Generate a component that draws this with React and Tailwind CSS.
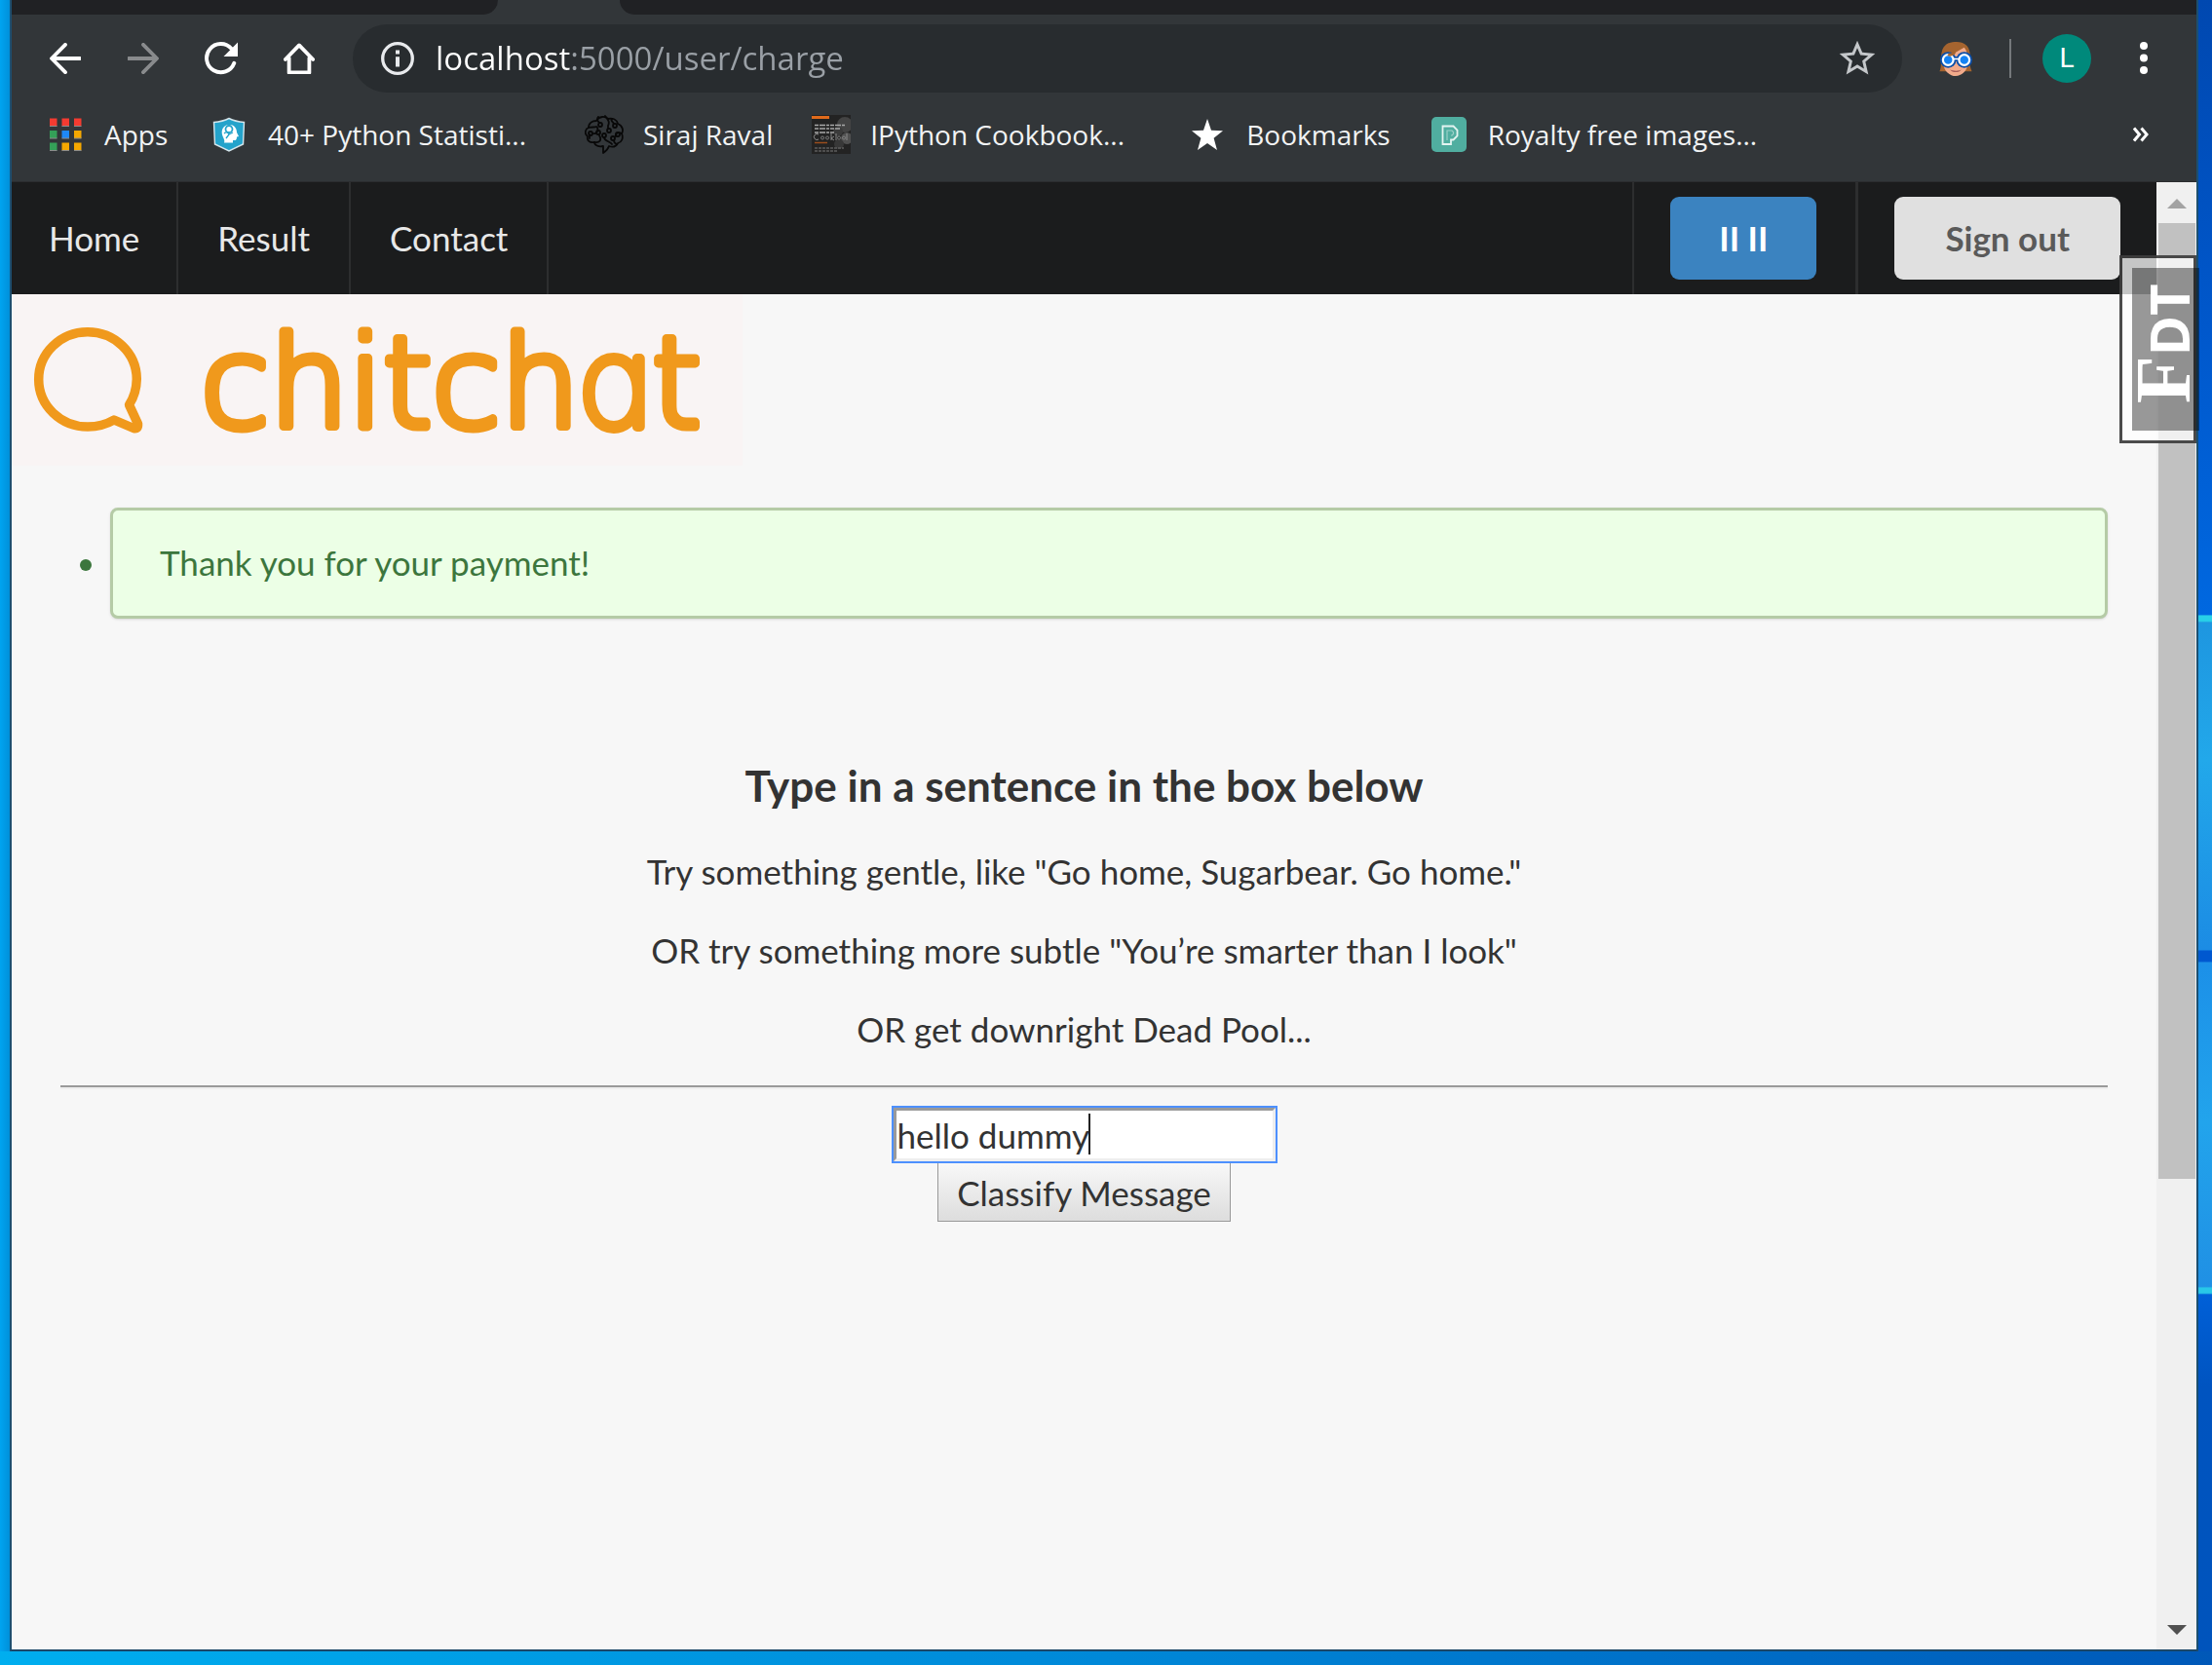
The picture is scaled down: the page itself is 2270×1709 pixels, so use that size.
import React from 'react';

function BackIcon() {
  return (
    <svg className="size-8" viewBox="0 0 32 32" fill="none" stroke="currentColor" strokeWidth="3.8" strokeLinecap="round" strokeLinejoin="round">
      <path d="M16 1.8 2 16l14 14.2M2.5 16H31" />
    </svg>
  );
}

function ReloadIcon() {
  return (
    <svg className="size-9" viewBox="0 0 36 36" fill="none">
      <path d="M31.3 22.8A14.6 14.6 0 1 1 28.6 8" stroke="currentColor" strokeWidth="3.9" strokeLinecap="round" />
      <path d="M35 1.500V16H20.500Z" fill="currentColor" />
    </svg>
  );
}

function HomeIcon() {
  return (
    <svg className="size-8" viewBox="0 0 32 32" fill="none" stroke="currentColor" strokeWidth="3.8" strokeLinecap="round" strokeLinejoin="round">
      <path d="M1.800 17 16 2.400 30.200 17M5.600 15.500V30.500H26.400V15.500" />
    </svg>
  );
}

function InfoIcon() {
  return (
    <svg className="size-[34px]" viewBox="0 0 34 34" fill="none">
      <circle cx="17" cy="17" r="15.3" stroke="#e8eaed" strokeWidth="3.3" />
      <path d="M15 8.500h4v4h-4zM15 15.300h4v10.200h-4z" fill="#e8eaed" />
    </svg>
  );
}

function StarOutlineIcon() {
  return (
    <svg className="size-11" viewBox="0 0 24 24" fill="#c4c7ca">
      <path d="M22 9.240l-7.190-.620L12 2 9.190 8.630 2 9.240l5.460 4.730L5.820 21 12 17.270 18.180 21l-1.630-7.030L22 9.240zM12 15.400l-3.760 2.270 1-4.280-3.320-2.880 4.380-.380L12 6.100l1.710 4.040 4.380.380-3.320 2.880 1 4.280L12 15.400z" />
    </svg>
  );
}

function GogglesFace() {
  return (
    <svg className="size-9" viewBox="0 0 36 37" fill="none">
      <path d="M1 32C4 26 1 18 4 9 7 2 13 1 19 1c8 0 13 4 14 12 0 7-1 12 2 19Z" fill="#a5642f" />
      <path d="M5 17C12 17 21 10 27 7c3 4 5 10 4 17-1 8-7 13-13 13S5 32 5 23Z" fill="#f2ab8b" />
      <path d="M12 30c4 2 9 2 12 0-2 4-10 4-12 0Z" fill="#a9605c" />
      <path d="M15 19h7" stroke="#0d4fa8" strokeWidth="5" />
      <circle cx="10" cy="20" r="8.500" fill="#0d4fa8" />
      <circle cx="27" cy="20" r="8.500" fill="#0d4fa8" />
      <path d="M15 19h7" stroke="#fff" strokeWidth="1.600" />
      <circle cx="10" cy="20" r="5.500" fill="#1583f4" stroke="#fff" strokeWidth="2.300" />
      <circle cx="27" cy="20" r="5.500" fill="#1583f4" stroke="#fff" strokeWidth="2.300" />
      <path d="M10 14c3 2 5 0 7-2" stroke="#a5642f" strokeWidth="3" />
    </svg>
  );
}

function AppsIcon() {
  const colors = ['#f43b31', '#f43b31', '#f43b31', '#34a058', '#1e88f7', '#f5a800', '#34a058', '#f5a800', '#f5a800'];
  return (
    <svg className="size-10" viewBox="0 0 40 40">
      {colors.map((c, i) => (
        <g key={i}>
          <rect x={4 + (i % 3) * 12.5} y={3.500 + Math.floor(i / 3) * 12.5} width="7.500" height="8" fill={c} />
          <rect x={4 + (i % 3) * 12.5} y={11 + Math.floor(i / 3) * 12.5} width="7.500" height="1" fill="#8b8b8b" />
        </g>
      ))}
    </svg>
  );
}

function ShieldIcon() {
  return (
    <svg className="size-10" viewBox="0 0 40 40">
      <path d="M20 3.500C25 6 30 7 35.500 7.500L34.500 30 20 37 5.500 30 4.500 7.500C10 7 15 6 20 3.500Z" fill="#24a3cb" stroke="#d5e6ec" strokeWidth="1.400" />
      <path d="M15 28.500c1.500-3-2.300-6-2.300-10.500C12.700 13 16 10 20.500 10s7.500 3.500 7.500 8l2 4-2 .500c0 3-1 4-4 3.500v2.500Z" fill="#fff" />
      <circle cx="20" cy="14.500" r="3.500" fill="none" stroke="#24a3cb" strokeWidth="1.800" />
      <path d="M15 19c2-2 4-1 5 1l4-2M20 20l-3 4" fill="none" stroke="#24a3cb" strokeWidth="1.300" />
    </svg>
  );
}

function BrainIcon() {
  return (
    <svg className="size-10" viewBox="0 0 40 40" fill="none" stroke="#080808" strokeWidth="1.800" strokeLinecap="round" strokeLinejoin="round">
      <path d="M19 39v-7c-5 1-9-1-9-4-5 1-8-2-7-6-4-3-2-8 1-9 0-5 4-7 8-7 3-5 9-5 12-2 5-1 9 1 10 5 5 2 6 7 4 10 2 5 0 9-4 10-2 4-6 4-9 3-1 3-3 5-6 7Z" />
      <path d="M14 2c-2 2 0 5 1 6M21 1c3 4 5 6 3 10v3M28 4c-2 2 2 4 2 5M10 28c5 1 8-2 5-7M5 24V20M9 19c4 1 5-4 4-6M33 30c-3-1-3-3-3-4M38 19c-4-2-7 0-6 3M20 23c0 4 6 4 8 7M4 13c4-1 6 0 8-1" />
      <circle cx="16" cy="10" r="2" /><circle cx="25" cy="16" r="2" /><circle cx="31" cy="11" r="2" />
      <circle cx="14" cy="18" r="2" /><circle cx="20" cy="21" r="2" /><circle cx="29" cy="24" r="2" />
      <circle cx="6" cy="19" r="2" /><circle cx="34" cy="20" r="2" />
    </svg>
  );
}

function BookCoverIcon() {
  return (
    <svg className="size-10" viewBox="0 0 40 40">
      <rect width="40" height="40" fill="#232323" />
      <circle cx="34" cy="10" r="8" fill="#444" /><circle cx="36" cy="24" r="6" fill="#505050" /><circle cx="27" cy="17" r="5" fill="#3b3b3b" /><circle cx="28" cy="30" r="5" fill="#383838" />
      <rect y="1" width="18" height="3" fill="#e06a1b" />
      <path d="M3 10.500h31M3 14h26M3 18h21" stroke="#a8a8a8" strokeWidth="1.500" strokeDasharray="4 1 6 1 3 1" />
      <path d="M7 20a3 3 0 1 0 0 5M11 22a1.500 1.500 0 1 0 .1 0M16 22a1.500 1.500 0 1 0 .1 0M20 19v7M23 22l-3 2 3 2M25 19v7M28 22a1.500 1.500 0 1 0 .1 0M33 22a1.500 1.500 0 1 0 .1 0M36 19v7" stroke="#8a8a8a" fill="none" />
      <path d="M3 28.500h13" stroke="#9b4d1d" strokeWidth="1.500" />
      <path d="M3 34h30M3 37h24" stroke="#5e5e5e" strokeWidth="1.400" strokeDasharray="3 1" />
    </svg>
  );
}

function StarIcon() {
  return (
    <svg className="size-10" viewBox="0 0 40 40">
      <path d="M20 4l4 11.800 12 .4-9.400 7.500L30 36l-10-7-10 7 3.400-12.300L4 16.200l12-.4Z" fill="#fff" />
    </svg>
  );
}

function PexelsIcon() {
  return (
    <svg className="size-10" viewBox="0 0 40 40">
      <rect x="2" y="2" width="36" height="36" rx="5" fill="#50aea0" />
      <path d="M13.500 11.500h11l4 4v6l-4 4H22V30h-8.500Z" fill="none" stroke="#e3f4f1" strokeWidth="1.800" />
      <path d="M18 26V16h5l1.500 1.500v2L23 21h-1" fill="none" stroke="#9bd0c8" strokeWidth="1.200" />
    </svg>
  );
}

const bookmarks = [
  { label: 'Apps', icon: AppsIcon, size: 'w-[68px]' },
  { label: '40+ Python Statisti...', icon: ShieldIcon, size: 'w-[285px]' },
  { label: 'Siraj Raval', icon: BrainIcon, size: '' },
  { label: 'IPython Cookbook...', icon: BookCoverIcon, size: 'w-[286px]' },
  { label: 'Bookmarks', icon: StarIcon, size: '' },
  { label: 'Royalty free images...', icon: PexelsIcon, size: 'w-[285px]' },
];

function BrowserChrome() {
  return (
    <header className="bg-[#323639] font-['Open_Sans',sans-serif] text-white">
      <div className="flex h-[15px]">
        <div className="w-[499px] rounded-br-[15px] bg-[#202124]" />
        <div className="w-[125px]" />
        <div className="flex-1 rounded-bl-[15px] bg-[#202124]" />
      </div>
      <div className="flex h-[89px] items-center pr-[50px] pl-[39px]">
        <button aria-label="Back"><BackIcon /></button>
        <button aria-label="Forward" className="ml-12 rotate-180 text-[#898b8d]"><BackIcon /></button>
        <button aria-label="Reload" className="ml-[46px]"><ReloadIcon /></button>
        <button aria-label="Home" className="ml-[46px]"><HomeIcon /></button>
        <div className="ml-[39px] flex h-[70px] flex-1 items-center rounded-full bg-[#282c2f] pr-6 pl-[29px]">
          <InfoIcon />
          <input
            aria-label="Address"
            defaultValue="localhost:5000/user/charge"
            className="ml-[22px] min-w-0 flex-1 bg-linear-[to_right,#fff_139px,#9aa0a6_139px] bg-clip-text text-[33px] leading-[60px] text-transparent outline-none"
          />
          <button aria-label="Bookmark this page"><StarOutlineIcon /></button>
        </div>
        <button aria-label="Extension" className="ml-[37px]"><GogglesFace /></button>
        <div className="ml-[37px] h-10 w-0.5 bg-[#75787b]" />
        <button aria-label="Profile" className="ml-8 size-[50px] rounded-full bg-[#00897b] font-[Roboto] text-[28px] leading-[50px]">L</button>
        <button aria-label="Menu" className="ml-[50px]">
          <svg className="h-9 w-2" viewBox="0 0 8 36" fill="#fff">
            <circle cx="4" cy="5" r="4" /><circle cx="4" cy="17.500" r="4" /><circle cx="4" cy="30" r="4" />
          </svg>
        </button>
      </div>
      <nav aria-label="Bookmarks" className="flex h-[83px] items-center gap-10 border-b border-[#2b2d2f] pr-[49px] pb-[14px] pl-[35px] text-[28px] leading-10 text-[#f1f3f4]">
        {bookmarks.map(({ label, icon: Icon, size }) => (
          <a key={label} href="#" className="flex items-center gap-5 whitespace-nowrap">
            <Icon />
            <span className={size}>{label}</span>
          </a>
        ))}
        <button aria-label="More bookmarks" className="ml-auto">
          <svg className="h-4 w-4" viewBox="0 0 16 16" fill="none" stroke="#fff" strokeWidth="3">
            <path d="M1 1.500 6.500 8 1 14.500M8.500 1.500 14 8l-5.500 6.500" />
          </svg>
        </button>
      </nav>
    </header>
  );
}

function MenuBar() {
  return (
    <nav aria-label="Main" className="flex h-[115px] bg-[#1b1c1d] text-[35px] leading-[50px] text-[#e8e8e8]">
      <a href="#" className="flex items-center border-r-2 border-[#2d2e2f] px-[38px] pb-0.5">Home</a>
      <a href="#" className="flex items-center border-r-2 border-[#2d2e2f] px-10 pb-0.5">Result</a>
      <a href="#" className="flex items-center border-r-2 border-[#2d2e2f] px-10 pb-0.5">Contact</a>
      <div className="ml-auto flex items-center border-l-2 border-[#2d2e2f] pr-10 pl-[37px]">
        <button className="h-[85px] rounded-[9px] bg-[#3b83c0] px-[50px] pb-0.5 font-bold text-white">II II</button>
      </div>
      <div className="flex items-center border-l-[3px] border-[#2d2e2f] px-[37px]">
        <button className="h-[85px] rounded-[9px] bg-[#e0e0e0] px-[52px] pb-0.5 font-bold text-[#5a5a5a]">Sign out</button>
      </div>
    </nav>
  );
}

function Logo() {
  return (
    <svg className="h-44 w-[750px] bg-[#f9f4f4]" viewBox="0 0 750 176" role="img" aria-label="chitchat">
      <path
        d="M128.300 87A50.300 48.600 0 1 0 78 136Q93 136 105 129L125 137.500Q130 139 129.500 133L120.500 113.500Q128 102 128.300 87Z"
        fill="none" stroke="#f0991c" strokeWidth="9.500" strokeLinejoin="round" strokeLinecap="round"
      />
      <text
        x="194" y="136" fontSize="128" fontFamily="'DejaVu Sans Light', 'DejaVu Sans', sans-serif" fontWeight="200"
        fill="#f0991c" stroke="#f0991c" strokeWidth="9" strokeLinejoin="round"
      >
        chitch
        <tspan
          fontFamily="Inter, sans-serif" fontWeight="100" strokeWidth="10"
          className="[font-feature-settings:'cv11']"
        >
          a
        </tspan>
        t
      </text>
    </svg>
  );
}

function FdtTab() {
  return (
    <button className="absolute top-[75px] right-0 h-[193px] w-[79px] border-[3px] border-black/70 bg-white/75 py-2.5 pl-2.5">
      <span className="block h-full rotate-180 bg-black/40 pt-3 text-center font-['Open_Sans',sans-serif] text-[56px] leading-[64px] font-bold text-white [text-orientation:sideways] [writing-mode:vertical-rl]">
        <span className="font-['Liberation_Serif',serif] text-[80px]">F</span>DT
      </span>
    </button>
  );
}

function Scrollbar() {
  return (
    <div className="flex w-[41px] flex-col bg-[#f0f0f0] pr-px pl-0.5">
      <svg className="h-[42px] w-full" viewBox="0 0 38 42"><path d="M9 27 19 17l10 10Z" fill="#a3a3a3" /></svg>
      <div className="flex h-0 flex-1 flex-col"><div className="h-[69%] bg-[#c1c1c1]" /></div>
      <svg className="h-[42px] w-full" viewBox="0 0 38 42"><path d="M9 17 19 27l10-10Z" fill="#505050" /></svg>
    </div>
  );
}

function Page() {
  return (
    <div className="min-w-0 flex-1 bg-[#f7f7f7] text-[35px] leading-[50px] text-[#333]">
      <MenuBar />
      <Logo />
      <main className="px-[50px] pt-[43px]">
        <ul className="text-[#3c763d]">
          <li className="flex items-center gap-[19px] pl-5">
            <span className="mt-1 size-3 rounded-full bg-[#3c763d]" />
            <p className="flex-1 rounded-lg border-[3px] border-[#b5cba6] bg-[#ecffe6] px-12 pt-7 pb-[30px] shadow-sm">Thank you for your payment!</p>
          </li>
        </ul>
        <form className="mt-[142px] flex flex-col items-center" onSubmit={(e) => e.preventDefault()}>
          <h1 className="text-[44px] leading-[58px] font-bold">Type in a sentence in the box below</h1>
          <p className="mt-[34px]">Try something gentle, like "Go home, Sugarbear. Go home."</p>
          <p className="mt-[31px]">OR try something more subtle "You’re smarter than I look"</p>
          <p className="mt-[31px]">OR get downright Dead Pool...</p>
          <hr className="mt-[33px] mb-[19px] w-full border-t-2 border-b-2 border-t-[#9a9a9a] border-b-[#eeeeee]" />
          <div className="relative">
            <input
              aria-label="Message"
              defaultValue="hello dummy"
              className="block h-[55px] w-[392px] border-[3px] border-t-[#9a9a9a] border-r-[#eee] border-b-[#eee] border-l-[#9a9a9a] bg-white px-px outline-2 outline-[#4d90fe]"
            />
            <span className="absolute top-1.5 left-[200px] h-[42px] w-0.5 bg-[#222]" />
          </div>
          <button className="mt-px h-[61px] border border-[#999] bg-linear-to-b from-[#f8f8f8] to-[#dddddd] px-[19px]">Classify Message</button>
        </form>
      </main>
    </div>
  );
}

export default function App() {
  return (
    <div className="grid h-screen grid-cols-[10px_1fr_14px] grid-rows-[1fr_14px] overflow-hidden font-[Lato,sans-serif]">
      <div className="bg-linear-to-r from-[#00a4f0] to-[#0090da]" />
      <div className="flex min-h-0 flex-col border-x-2 border-b-2 border-x-[#1d4f70] border-b-[#1b4768]">
        <BrowserChrome />
        <div className="relative flex min-h-0 flex-1">
          <Page />
          <Scrollbar />
          <FdtTab />
        </div>
      </div>
      <div className="bg-linear-[to_bottom,#0048b0_0%,#0058cc_20%,#0068e0_37.2%,#28d0e8_37.3%,#28d0e8_37.6%,#1e96e0_37.7%,#22a8ea_46%,#1c8ce4_57.500%,#0058d0_57.600%,#0058d0_58.200%,#1c90e8_58.300%,#22a4ec_68%,#2090e4_77.900%,#28c8e8_78%,#28c8e8_78.300%,#0060d8_78.400%,#0054c0_84%,#0054bc_100%]" />
      <div className="col-span-3 bg-linear-to-r from-[#00aeef] via-[#0088d8] to-[#0058b8]" />
    </div>
  );
}
